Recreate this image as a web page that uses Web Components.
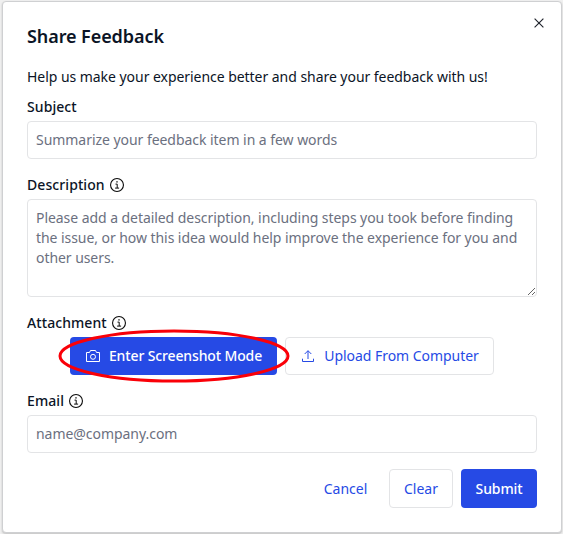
<!DOCTYPE html>
<html lang="en">
<head>
<meta charset="utf-8">
<title>Share Feedback</title>
<style>
html,body{margin:0;height:100%;background:#f0f0f0;overflow:hidden}
body{font:400 14px/20px "Noto Sans","Open Sans",sans-serif;color:#0b1426}
</style>
</head>
<body>
<feedback-dialog></feedback-dialog>
<script>
const define = (name, html) => {
  const t = document.createElement('template');
  t.innerHTML = html;
  customElements.define(name, class extends HTMLElement {
    constructor() {
      super();
      this.attachShadow({mode: 'open'}).appendChild(t.content.cloneNode(true));
    }
    connectedCallback() {
      const box = this.shadowRoot.querySelector('[data-input]');
      if (box) box.placeholder = this.getAttribute('placeholder') || '';
    }
  });
};

define('info-icon', `
<style>:host{display:block;width:14px;height:14px}svg{display:block}</style>
<svg width="14" height="14" viewBox="0 0 14 14" fill="none" stroke="#0a0a0a">
<circle cx="7" cy="7" r="6.45" stroke-width="1.1"/>
<path d="M5.5 6.1H7.2V10M5.1 10.1H9.1" stroke-width="1"/><path d="M6.3 3.9H7.7" stroke-width="1.3"/></svg>`);

define('camera-icon', `
<style>:host{display:block;width:14px;height:12px}svg{display:block}</style>
<svg width="14" height="12" viewBox="0 0 14 12" fill="none" stroke="currentColor" stroke-width="1">
<path d="M.5 2.5H3.5L4.5.5H9.5L10.5 2.5H13.5V11.5H.5Z"/><circle cx="7" cy="6.8" r="2.5"/></svg>`);

define('upload-icon', `
<style>:host{display:block;width:12px;height:12px}svg{display:block}</style>
<svg width="12" height="12" viewBox="0 0 12 12" fill="none" stroke="currentColor" stroke-width="1">
<path d="M.5 8.7V11.5H11.5V8.7M6 9V.8M2.7 4L6 .7L9.3 4"/></svg>`);

define('close-button', `
<style>:host{display:block;width:10px;height:10px}svg{display:block}</style>
<svg width="10" height="10" viewBox="0 0 10 10" stroke="#20242c" stroke-width="1.15"><path d="M.6.6L9.4 9.4M9.4.6L.6 9.4"/></svg>`);

define('form-field', `
<style>:host{display:flex;flex-direction:column;gap:4px}
.label{display:flex;align-items:center;gap:5px;height:20px;font-weight:500;letter-spacing:.08px}</style>
<div class="label"><slot name="label"></slot><slot name="info"></slot></div><slot></slot>`);

const boxStyle = `:host{display:block}
[data-input]{display:block;box-sizing:border-box;width:100%;margin:0;border:1px solid #e3e4e6;border-radius:4px;background:#fff;padding:8px;font:inherit;letter-spacing:inherit;color:inherit;outline:0}
[data-input]::placeholder{color:#6b7080;opacity:1}`;
define('text-box', `<style>${boxStyle} :host{letter-spacing:-.045px} input[data-input]{height:38px;padding:7px 8px 9px}</style><input data-input>`);
define('text-area', `<style>${boxStyle} :host{letter-spacing:-.06px} textarea{height:98px;resize:vertical;overflow:hidden}</style><textarea data-input></textarea>`);

define('action-button', `
<style>:host{display:flex;box-sizing:border-box;height:38px;align-items:center;justify-content:center;gap:9px;border:1px solid transparent;border-radius:4px;color:#264ae5;white-space:nowrap}
:host([kind=outline]){border-color:#e3e4e6}
:host([kind=primary]){background:#264ae5;color:#fff;font-weight:500;letter-spacing:-.13px}</style>
<slot name="icon"></slot><slot></slot>`);

define('highlight-ring', `
<style>:host{position:absolute;left:-12px;top:-8px;width:232px;height:54px;pointer-events:none}svg{display:block}</style>
<svg width="232" height="54" viewBox="0 0 232 54"><ellipse cx="116" cy="27" rx="114" ry="25" fill="none" stroke="#fa0008" stroke-width="3"/></svg>`);

define('feedback-dialog', `
<style>
:host{display:block;box-sizing:border-box;height:534px;padding:1px 2px}
.card{display:flex;flex-direction:column;box-sizing:border-box;width:560px;height:532px;padding:16px 24px 24px;background:#fff;border:1px solid #cfd0d2;border-radius:4px;box-shadow:0 1px 2px #0003}
header{display:flex;justify-content:space-between;height:49px}
h1{margin:5px 0 0;font-size:18px;line-height:26px;font-weight:600;letter-spacing:-.08px}
close-button{margin-right:-7px}
p{margin:0 0 10px;letter-spacing:-.045px}
.fields{display:flex;flex-direction:column;gap:16px}
.attach{display:flex;gap:8px;padding-left:43px}
.spot{position:relative}
.spot action-button{width:207px;gap:9px;padding-left:1px}
.upload{width:209px;gap:10px;padding-left:2px;letter-spacing:-.04px}
footer{display:flex;justify-content:flex-end;gap:8px;margin-top:16px}
footer action-button{height:39px}
.cancel{width:71px}.clear{width:64px}.submit{width:76px}
</style>
<section class="card">
<header><h1>Share Feedback</h1><close-button></close-button></header>
<p>Help us make your experience better and share your feedback with us!</p>
<div class="fields">
<form-field><span slot="label">Subject</span><text-box placeholder="Summarize your feedback item in a few words"></text-box></form-field>
<form-field><span slot="label">Description</span><info-icon slot="info"></info-icon><text-area placeholder="Please add a detailed description, including steps you took before finding the issue, or how this idea would help improve the experience for you and other users."></text-area></form-field>
<form-field><span slot="label">Attachment</span><info-icon slot="info"></info-icon>
<div class="attach"><div class="spot"><action-button kind="primary"><camera-icon slot="icon"></camera-icon><span>Enter Screenshot Mode</span></action-button><highlight-ring></highlight-ring></div>
<action-button class="upload" kind="outline"><upload-icon slot="icon"></upload-icon><span>Upload From Computer</span></action-button></div></form-field>
<form-field><span slot="label">Email</span><info-icon slot="info"></info-icon><text-box placeholder="name@company.com"></text-box></form-field>
</div>
<footer><action-button class="cancel">Cancel</action-button><action-button class="clear" kind="outline">Clear</action-button><action-button class="submit" kind="primary">Submit</action-button></footer>
</section>`);
</script>
</body>
</html>
